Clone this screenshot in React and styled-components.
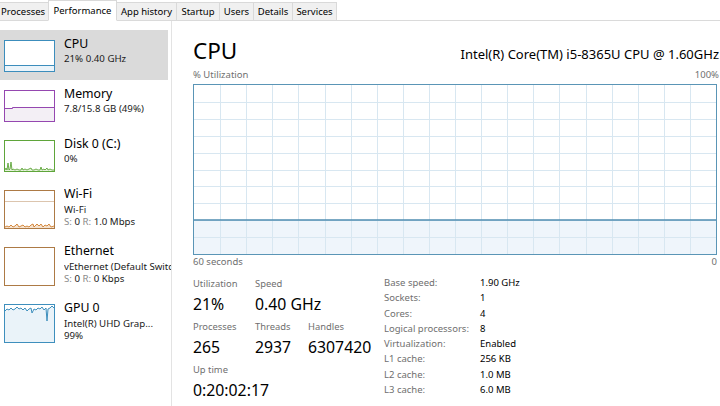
import React from "react"
import styled, { createGlobalStyle } from "styled-components"

const GlobalStyle = createGlobalStyle`
  html, body {
    margin: 0;
    padding: 0;
    background: #fff;
  }
  body {
    font-family: "Noto Sans", "Open Sans", sans-serif;
    color: #000;
    overflow: hidden;
  }
`

const Window = styled.div`
  width: 720px;
  height: 406px;
  display: flex;
  flex-direction: column;
  overflow: hidden;
  background: #fff;
`

const TabBar = styled.div`
  flex: none;
  display: flex;
  align-items: flex-end;
  height: 21px;
  box-sizing: border-box;
  border-bottom: 1px solid #dadada;
`

const Tab = styled.div`
  box-sizing: border-box;
  width: ${p => p.$w}px;
  height: ${p => (p.$active ? 21 : 18)}px;
  margin-left: -1px;
  margin-bottom: ${p => (p.$active ? -1 : 0)}px;
  padding-left: ${p => (p.$start ? 1 : 0)}px;
  display: flex;
  align-items: center;
  justify-content: ${p => (p.$start ? "flex-start" : "center")};
  font-size: 9.5px;
  line-height: 13px;
  white-space: nowrap;
  background: ${p => (p.$active ? "#fff" : "#f0f0f0")};
  border: 1px solid #d9d9d9;
  border-bottom: ${p => (p.$active ? "1px solid #fff" : "none")};
`

const Body = styled.div`
  flex: 1;
  min-height: 0;
  display: flex;
`

const Sidebar = styled.div`
  flex: none;
  width: 172px;
  box-sizing: border-box;
  padding-top: 9px;
  border-right: 1px solid #e3e3e3;
`

const SideItem = styled.div`
  width: 168px;
  box-sizing: border-box;
  display: flex;
  align-items: flex-start;
  gap: 9px;
  padding: 10px 0 8px 4px;
  background: ${p => (p.$selected ? "#dadada" : "transparent")};
`

const Thumb = styled.div`
  flex: none;
  width: 51px;
  height: ${p => p.$h}px;
  box-sizing: border-box;
  border: 1px solid ${p => p.$color};
  background: #fff;
  overflow: hidden;

  svg {
    display: block;
  }
`

const ItemText = styled.div`
  flex: none;
  width: 107px;
  margin-top: -4px;
  overflow: hidden;
  white-space: nowrap;
`

const ItemTitle = styled.div`
  font-size: 12.3px;
  line-height: 15px;
  margin-bottom: ${p => (p.$tall ? 3 : 1.8)}px;
`

const ItemSub = styled.div`
  font-size: 9.7px;
  line-height: 11.5px;
  color: #1a1a1a;
`

const Dim = styled.span`
  color: #8a8a8a;
`

const Main = styled.div`
  flex: 1;
  min-width: 0;
  display: flex;
  flex-direction: column;
  padding: 16px 3px 0 21px;
`

const HeadRow = styled.div`
  display: flex;
  justify-content: space-between;
  align-items: baseline;
`

const Heading = styled.div`
  font-size: 22.5px;
  line-height: 27px;
`

const CpuName = styled.div`
  font-size: 13px;
  line-height: 16px;
  margin-right: -2px;
`

const AxisRow = styled.div`
  display: flex;
  justify-content: space-between;
  font-size: 9.5px;
  line-height: 12px;
  color: #6f6f6f;
  margin-top: ${p => p.$mt}px;
  margin-right: ${p => p.$mr || 0}px;
`

const GraphBox = styled.div`
  height: 171px;
  box-sizing: border-box;
  margin-top: 3px;
  border: 1px solid #5a95b6;

  svg {
    display: block;
  }
`

const Stats = styled.div`
  display: flex;
  margin-top: 7px;
`

const StatGrid = styled.div`
  flex: none;
  width: 191px;
  padding-top: 3px;
  display: grid;
  grid-template-columns: 62px 53px auto;
  row-gap: 7px;
  align-content: start;
`

const Stat = styled.div`
  display: flex;
  flex-direction: column;
  grid-column: ${p => p.$span || "auto"};
`

const StatLabel = styled.div`
  font-size: 9.4px;
  line-height: 12px;
  color: #6f6f6f;
`

const StatValue = styled.div`
  font-size: 15.8px;
  line-height: 20px;
  margin-top: 4px;
  white-space: nowrap;
`

const Details = styled.div`
  display: grid;
  grid-template-columns: 96px auto;
  font-size: 9.5px;
  line-height: 15.25px;
  align-content: start;
`

const DetailLabel = styled.div`
  color: #6f6f6f;
`

const DetailValue = styled.div`
  color: #000;
`

const toPath = pts => pts.map(([x, y], i) => `${i ? "L" : "M"}${x} ${y}`).join(" ")

function Spark({ kind, h }) {
  const w = 49
  const ih = h - 2
  if (kind === "cpu") {
    return (
      <svg width={w} height={ih}>
        <rect x="0" y="24" width={w} height={ih - 24} fill="#ebf4fa" />
        <line x1="0" x2={w} y1="24.5" y2="24.5" stroke="#3c8dbc" />
      </svg>
    )
  }
  if (kind === "memory") {
    return (
      <svg width={w} height={ih}>
        <path d={`M0 17 H7 V16 H${w} V${ih} H0 Z`} fill="#f3eff5" />
        <path d={`M0 17.5 H7.5 V16.5 H${w}`} fill="none" stroke="#9547b0" />
      </svg>
    )
  }
  if (kind === "disk") {
    const pts = [[0, 29], [1, 27], [2, 29], [3, 22], [4, 29], [5, 28], [6, 21], [7, 29], [8, 28], [10, 29], [12, 28], [14, 29], [16, 29], [17, 27], [18, 29], [20, 28], [22, 29], [24, 28], [26, 27], [27, 29], [29, 29], [31, 28], [33, 29], [35, 29], [36, 26], [37, 29], [39, 28], [40, 29], [42, 27], [43, 29], [45, 28], [47, 29], [49, 29]]
    return (
      <svg width={w} height={ih}>
        <path d={`${toPath(pts)} L49 30 L0 30 Z`} fill="#e6f2dc" />
        <path d={toPath(pts)} fill="none" stroke="#5fa53a" strokeWidth="0.9" />
      </svg>
    )
  }
  if (kind === "wifi") {
    const pts = [[0, 36], [2, 35], [4, 36], [6, 34], [8, 36], [10, 35], [12, 33], [14, 36], [16, 35], [18, 34], [20, 36], [22, 35], [24, 36], [26, 34], [28, 33], [29, 36], [31, 34], [32, 33], [34, 35], [36, 33], [38, 36], [40, 34], [42, 35], [44, 33], [46, 36], [49, 35]]
    return (
      <svg width={w} height={ih}>
        <line x1="0" x2={w} y1="10.5" y2="10.5" stroke="#dcc5ae" />
        <path d={`${toPath(pts)} L49 37 L0 37 Z`} fill="#f6e3cf" />
        <path d={toPath(pts)} fill="none" stroke="#cf7d2c" strokeWidth="0.9" />
      </svg>
    )
  }
  if (kind === "gpu") {
    const pts = [[0, 6], [2, 4], [4, 5], [6, 3], [8, 5], [10, 4], [12, 2], [14, 4], [16, 3], [18, 5], [20, 3], [22, 6], [24, 4], [26, 3], [27, 8], [29, 4], [31, 5], [33, 3], [35, 4], [37, 2], [39, 5], [41, 3], [42, 16], [43, 4], [45, 3], [47, 1], [49, 3]]
    return (
      <svg width={w} height={ih}>
        <path d={`${toPath(pts)} L49 37 L0 37 Z`} fill="#eaf3f9" />
        <path d={toPath(pts)} fill="none" stroke="#3e8fbd" />
      </svg>
    )
  }
  return <svg width={w} height={ih} />
}

function UsageGraph() {
  const w = 522
  const h = 169
  const cols = Array.from({ length: 19 }, (_, i) => Math.round(((i + 1) * w) / 20) + 0.5)
  const rows = Array.from({ length: 9 }, (_, i) => Math.round(((i + 1) * h) / 10) + 0.5)
  const y = Math.round(h * 0.8)
  return (
    <svg width="100%" height={h} viewBox={`0 0 ${w} ${h}`} preserveAspectRatio="none">
      <rect x="0" y={y} width={w} height={h - y} fill="#eff5fb" />
      {cols.map(x => (
        <line key={`c${x}`} x1={x} x2={x} y1="0" y2={h} stroke="#d8e7f1" />
      ))}
      {rows.map(r => (
        <line key={`r${r}`} x1="0" x2={w} y1={r} y2={r} stroke="#d8e7f1" />
      ))}
      <line x1="0" x2={w} y1={y} y2={y} stroke="#4f8cb0" strokeWidth="1.6" />
    </svg>
  )
}

const tabs = [
  { label: "Processes", w: 50, start: true },
  { label: "Performance", w: 69, active: true },
  { label: "App history", w: 61 },
  { label: "Startup", w: 44 },
  { label: "Users", w: 35 },
  { label: "Details", w: 40 },
  { label: "Services", w: 45 },
]

const resources = [
  { title: "CPU", kind: "cpu", color: "#3c8dbc", selected: true, lines: ["21% 0.40 GHz"] },
  { title: "Memory", kind: "memory", color: "#9547b0", lines: ["7.8/15.8 GB (49%)"] },
  { title: "Disk 0 (C:)", kind: "disk", color: "#5fa53a", lines: ["0%"] },
  {
    title: "Wi-Fi",
    kind: "wifi",
    color: "#ad7a45",
    lines: ["Wi-Fi", <><Dim>S:</Dim> 0 <Dim>R:</Dim> 1.0 Mbps</>],
  },
  {
    title: "Ethernet",
    kind: "ethernet",
    color: "#ad7a45",
    lines: ["vEthernet (Default Switch)", <><Dim>S:</Dim> 0 <Dim>R:</Dim> 0 Kbps</>],
  },
  { title: "GPU 0", kind: "gpu", color: "#3e8fbd", lines: ["Intel(R) UHD Grap...", "99%"] },
]

const details = [
  ["Base speed:", "1.90 GHz"],
  ["Sockets:", "1"],
  ["Cores:", "4"],
  ["Logical processors:", "8"],
  ["Virtualization:", "Enabled"],
  ["L1 cache:", "256 KB"],
  ["L2 cache:", "1.0 MB"],
  ["L3 cache:", "6.0 MB"],
]

export default function App() {
  return (
    <>
      <GlobalStyle />
      <Window>
        <TabBar>
          {tabs.map(t => (
            <Tab key={t.label} $w={t.w} $active={t.active} $start={t.start}>
              {t.label}
            </Tab>
          ))}
        </TabBar>
        <Body>
          <Sidebar>
            {resources.map(r => {
              const tall = r.lines.length > 1
              return (
                <SideItem key={r.title} $selected={r.selected}>
                  <Thumb $color={r.color} $h={tall ? 39 : 32}>
                    <Spark kind={r.kind} h={tall ? 39 : 32} />
                  </Thumb>
                  <ItemText>
                    <ItemTitle $tall={tall}>{r.title}</ItemTitle>
                    {r.lines.map((l, i) => (
                      <ItemSub key={i}>{l}</ItemSub>
                    ))}
                  </ItemText>
                </SideItem>
              )
            })}
          </Sidebar>
          <Main>
            <HeadRow>
              <Heading>CPU</Heading>
              <CpuName>Intel(R) Core(TM) i5-8365U CPU @ 1.60GHz</CpuName>
            </HeadRow>
            <AxisRow $mt={5} $mr={-2}>
              <span>% Utilization</span>
              <span>100%</span>
            </AxisRow>
            <GraphBox>
              <UsageGraph />
            </GraphBox>
            <AxisRow $mt={1}>
              <span>60 seconds</span>
              <span>0</span>
            </AxisRow>
            <Stats>
              <StatGrid>
                <Stat>
                  <StatLabel>Utilization</StatLabel>
                  <StatValue>21%</StatValue>
                </Stat>
                <Stat $span="2 / span 2">
                  <StatLabel>Speed</StatLabel>
                  <StatValue>0.40 GHz</StatValue>
                </Stat>
                <Stat>
                  <StatLabel>Processes</StatLabel>
                  <StatValue>265</StatValue>
                </Stat>
                <Stat>
                  <StatLabel>Threads</StatLabel>
                  <StatValue>2937</StatValue>
                </Stat>
                <Stat>
                  <StatLabel>Handles</StatLabel>
                  <StatValue>6307420</StatValue>
                </Stat>
                <Stat $span="1 / span 3">
                  <StatLabel>Up time</StatLabel>
                  <StatValue>0:20:02:17</StatValue>
                </Stat>
              </StatGrid>
              <Details>
                {details.map(([k, v]) => (
                  <React.Fragment key={k}>
                    <DetailLabel>{k}</DetailLabel>
                    <DetailValue>{v}</DetailValue>
                  </React.Fragment>
                ))}
              </Details>
            </Stats>
          </Main>
        </Body>
      </Window>
    </>
  )
}
